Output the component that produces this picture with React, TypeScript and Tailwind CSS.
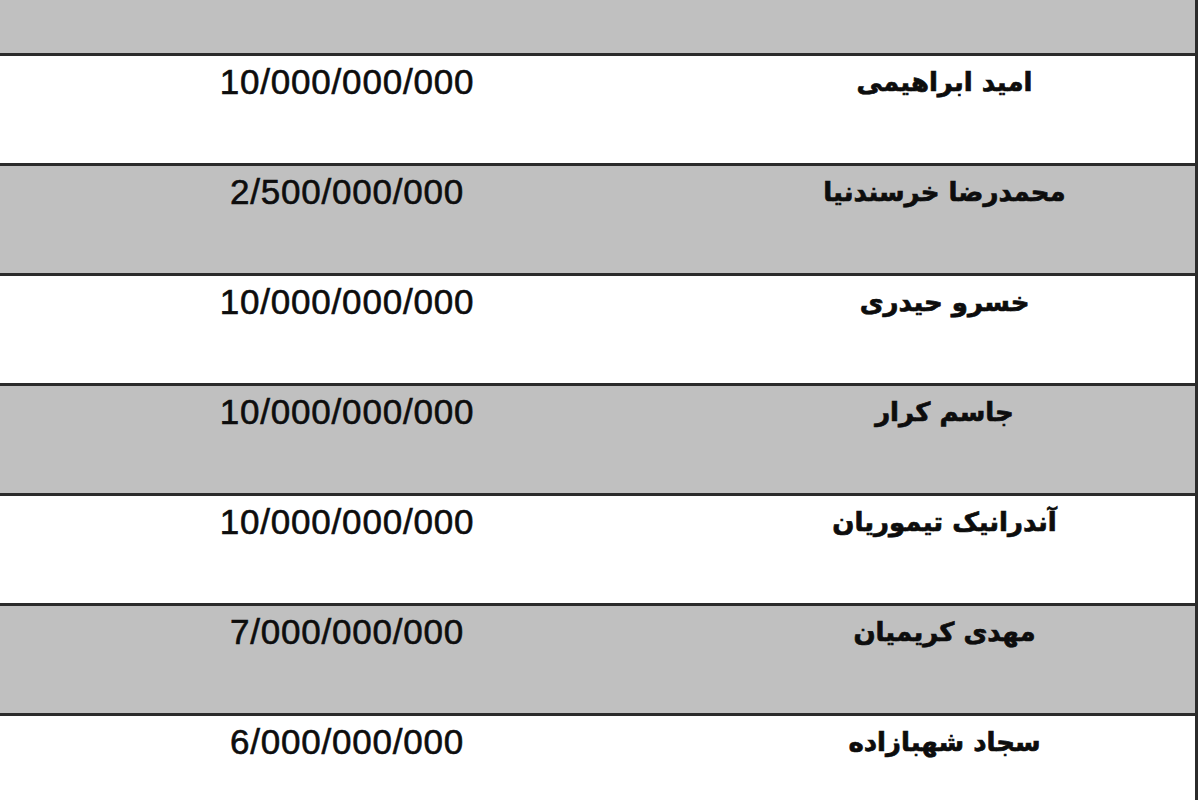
import React from "react";

const rows: { name: string; amount: string; gray: boolean }[] = [
  { name: "امید ابراهیمی", amount: "10/000/000/000", gray: false },
  { name: "محمدرضا خرسندنیا", amount: "2/500/000/000", gray: true },
  { name: "خسرو حیدری", amount: "10/000/000/000", gray: false },
  { name: "جاسم کرار", amount: "10/000/000/000", gray: true },
  { name: "آندرانیک تیموریان", amount: "10/000/000/000", gray: false },
  { name: "مهدی کریمیان", amount: "7/000/000/000", gray: true },
  { name: "سجاد شهبازاده", amount: "6/000/000/000", gray: false },
];

export default function App() {
  return (
    <div className="w-[1200px] h-[800px] overflow-hidden bg-white">
      <div className="w-[1198px] border-r-[3px] border-[#2b2b2b]">
        <div className="h-[53px] bg-[#c0c0c0]" />
        {rows.map((r, i) => (
          <div
            key={i}
            className={`flex h-[110px] border-t-[3px] border-[#2b2b2b] ${
              r.gray ? "bg-[#c0c0c0]" : "bg-white"
            }`}
          >
            <div
              className="w-[694px] pt-[6px] text-center text-[35px] leading-[40px] tracking-[0.8px] text-[#0d0d0d] [-webkit-text-stroke:0.6px_#0d0d0d]"
              style={{ fontFamily: '"Liberation Sans", Arial, sans-serif' }}
            >
              {r.amount}
            </div>
            <div
              dir="rtl"
              className="flex-1 pt-[6px] text-center text-[26px] leading-[40px] font-bold text-[#0d0d0d] [-webkit-text-stroke:0.7px_#0d0d0d]"
              style={{ fontFamily: '"DejaVu Sans", sans-serif' }}
            >
              {r.name}
            </div>
          </div>
        ))}
      </div>
    </div>
  );
}
